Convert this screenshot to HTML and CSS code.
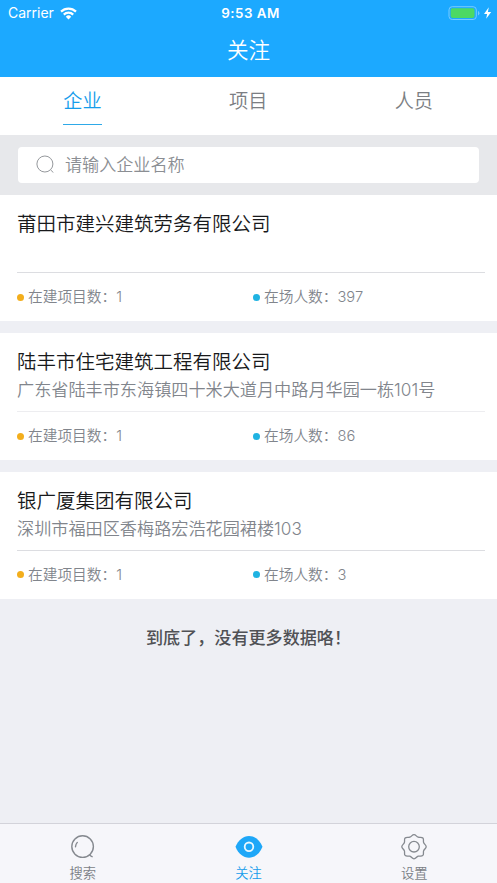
FILE: index.html
```html
<!DOCTYPE html>
<html lang="zh-CN">
<head>
<meta charset="utf-8">
<meta name="viewport" content="width=device-width, initial-scale=1">
<title>关注</title>
<link rel="stylesheet" href="styles.css">
</head>
<body>
<div class="app">
  <header class="header">
    <div class="status">
      <div class="status-left">
        <span class="carrier">Carrier</span>
        <svg class="wifi" width="17" height="13" viewBox="0 0 17 13" fill="none" stroke="#fff" stroke-width="2.2">
          <path d="M1 4.600a10.700 10.700 0 0 1 15 0"/>
          <path d="M3.800 7.600a6.700 6.700 0 0 1 9.400 0"/>
          <path d="M8.500 12.500 5.800 9.700a3.800 3.800 0 0 1 5.400 0z" fill="#fff" stroke="none"/>
        </svg>
      </div>
      <span class="clock">9:53 AM</span>
      <div class="status-right">
        <svg width="44" height="15" viewBox="0 0 44 15">
          <rect x="1" y=".7" width="27.3" height="12.8" rx="3.2" fill="none" stroke="#76cbff" stroke-width="1"/>
          <rect x="2.7" y="2.3" width="23.8" height="9.6" rx="1.8" fill="#4cd964"/>
          <path d="M30 5a2.4 2.4 0 0 1 0 4.400z" fill="#76cbff"/>
          <path d="M40.800 1.300 36 7.900h3.100l-.9 4.800 5-6.700h-3.300z" fill="#fff"/>
        </svg>
      </div>
    </div>
    <h1 class="title">关注</h1>
  </header>

  <nav class="tabs">
    <a class="tab tab-active"><span>企业</span></a>
    <a class="tab"><span>项目</span></a>
    <a class="tab"><span>人员</span></a>
  </nav>

  <div class="search">
    <div class="search-box">
      <svg width="19" height="19" viewBox="0 0 19 19" fill="none" stroke="#95989c" stroke-width="1">
        <circle cx="8.900" cy="10" r="8"/>
        <path d="M14.500 15.800l2.900 2.800"/>
      </svg>
      <span>请输入企业名称</span>
    </div>
  </div>

  <main class="list">
    <section class="card">
      <div class="card-info">
        <h2>莆田市建兴建筑劳务有限公司</h2>
        <p></p>
      </div>
      <div class="stats">
        <div class="stat"><i class="dot orange"></i><span>在建项目数：<b>1</b></span></div>
        <div class="stat"><i class="dot blue"></i><span>在场人数：<b>397</b></span></div>
      </div>
    </section>
    <section class="card">
      <div class="card-info card-info-faint">
        <h2>陆丰市住宅建筑工程有限公司</h2>
        <p>广东省陆丰市东海镇四十米大道月中路月华园一栋101号</p>
      </div>
      <div class="stats">
        <div class="stat"><i class="dot orange"></i><span>在建项目数：<b>1</b></span></div>
        <div class="stat"><i class="dot blue"></i><span>在场人数：<b>86</b></span></div>
      </div>
    </section>
    <section class="card">
      <div class="card-info">
        <h2>银广厦集团有限公司</h2>
        <p>深圳市福田区香梅路宏浩花园裙楼103</p>
      </div>
      <div class="stats">
        <div class="stat"><i class="dot orange"></i><span>在建项目数：<b>1</b></span></div>
        <div class="stat"><i class="dot blue"></i><span>在场人数：<b>3</b></span></div>
      </div>
    </section>
    <p class="end">到底了，没有更多数据咯！</p>
  </main>

  <footer class="tabbar">
    <a class="bar-item">
      <svg width="28" height="28" viewBox="0 0 28 28" fill="none" stroke="#85898f" stroke-width="1.4" stroke-linecap="round">
        <circle cx="13.600" cy="13.600" r="10.800"/>
        <path d="M20.800 21.800q.9 1.200 2.300 1.900M8.300 9.400c-1.100 1.200-1.700 2.600-1.800 4.300"/>
      </svg>
      <span>搜索</span>
    </a>
    <a class="bar-item bar-active">
      <svg width="28" height="28" viewBox="0 0 28 28">
        <path d="M.5 13.800C3.300 7 8.200 2.900 14 2.900S24.700 7 27.500 13.800C24.700 20.800 19.800 24.700 14 24.700S3.300 20.800.5 13.800z" fill="#1ea7f8"/>
        <circle cx="14" cy="13.800" r="4.300" fill="none" stroke="#e9f8ff" stroke-width="1.800"/>
      </svg>
      <span>关注</span>
    </a>
    <a class="bar-item">
      <svg width="28" height="28" viewBox="0 0 28 28" fill="none" stroke="#85898f" stroke-width="1.3" stroke-linejoin="round">
        <path d="M14 1.600C15.900 1.600 16.400 3.700 18.200 4.200S21.700 3.800 22.900 5 23 7.800 23.600 9.500 26.200 11.900 26.200 13.700 24.200 16.200 23.600 17.900 24.100 21.200 22.900 22.400 20 22.700 18.200 23.200 15.900 25.800 14 25.800 11.600 23.700 9.800 23.200 6.300 23.600 5.100 22.400 5 19.600 4.400 17.900 1.800 15.500 1.800 13.700 3.800 11.200 4.400 9.500 3.900 6.200 5.100 5 8 4.700 9.800 4.200 12.100 1.600 14 1.600z"/>
        <circle cx="14" cy="13.700" r="5.300"/>
      </svg>
      <span>设置</span>
    </a>
  </footer>
</div>
</body>
</html>
```
FILE: styles.css
```css
* { box-sizing: border-box; }

body, h1, h2, p { margin: 0; font-weight: inherit; }

body {
  font-family: Inter, "Noto Sans CJK SC DemiLight", "Noto Sans CJK SC Light", "Noto Sans CJK SC", sans-serif;
  font-weight: 350;
  background: #eeeff4;
}

svg { display: block; flex: none; }

.app {
  height: 883px;
  display: flex;
  flex-direction: column;
}

.header {
  height: 77px;
  background: #1ca9ff;
  color: #fff;
}

.status {
  height: 26px;
  display: grid;
  grid-template-columns: 1fr auto 1fr;
  align-items: center;
  padding: 0 4px 0 8px;
}

.status-left { display: flex; align-items: center; gap: 6px; }
.status-right { display: flex; justify-content: flex-end; margin-right: 1px; }
.carrier { font-size: 14px; line-height: 16px; font-weight: 400; padding-bottom: 1px; }
.clock { font-size: 13.4px; font-weight: 600; letter-spacing: .5px; }

.title {
  font-size: 21.6px;
  line-height: 49px;
  text-align: center;
}

.tabs {
  height: 57.5px;
  display: flex;
  background: #fff;
}

.tab {
  flex: 1;
  display: flex;
  justify-content: center;
  color: #7b7e83;
  font-size: 19.2px;
}

.tab span {
  width: 39px;
  height: 48px;
  line-height: 48px;
}

.tab-active { color: #149ceb; }
.tab-active span { border-bottom: 1px solid #2ea9e8; }

.search {
  height: 60px;
  padding: 12px 18px;
  background: #e7e8eb;
}

.search-box {
  height: 36px;
  display: flex;
  align-items: center;
  gap: 10.5px;
  padding: 0 0 2px 17.5px;
  border-radius: 4px;
  background: #fff;
  color: #8b8e93;
  font-size: 17.1px;
}

.list { flex: 1; }

.card {
  height: 126.8px;
  margin-bottom: 12px;
  padding: 0 12px 0 17px;
  background: #fff;
}

.card-info {
  height: 78.9px;
  padding-top: 15px;
  border-bottom: 1px solid #dcdde1;
}

.card-info-faint { border-color: #ededf0; }

.card h2 {
  font-size: 19.5px;
  line-height: 29px;
  color: #18191b;
}

.card p {
  font-size: 17.15px;
  line-height: 26px;
  color: #81858c;
  white-space: nowrap;
}

.stats {
  height: 48px;
  display: flex;
  align-items: center;
  color: #81858c;
  font-size: 14.7px;
}

.stat {
  flex: none;
  width: 236px;
  display: flex;
  align-items: center;
  line-height: 22px;
}

.stat b { font-weight: inherit; }

.dot {
  width: 7px;
  height: 7px;
  margin-right: 4px;
  border-radius: 50%;
}

.stat:last-child { width: auto; }

.orange { background: #f3ae1c; }
.blue { background: #20b3e2; }

.end {
  padding-top: 14px;
  text-align: center;
  font-family: Inter, "Noto Sans CJK SC", sans-serif;
  font-size: 17.1px;
  line-height: 26px;
  font-weight: 500;
  color: #505155;
}

.tabbar {
  height: 60px;
  display: flex;
  border-top: 1px solid #d3d3da;
  background: #f6f6fa;
}

.bar-item {
  flex: 1;
  display: flex;
  flex-direction: column;
  align-items: center;
  padding-top: 9px;
  color: #7b7f86;
  font-size: 13.3px;
  line-height: 24px;
}

.bar-active { color: #149ceb; }
```
